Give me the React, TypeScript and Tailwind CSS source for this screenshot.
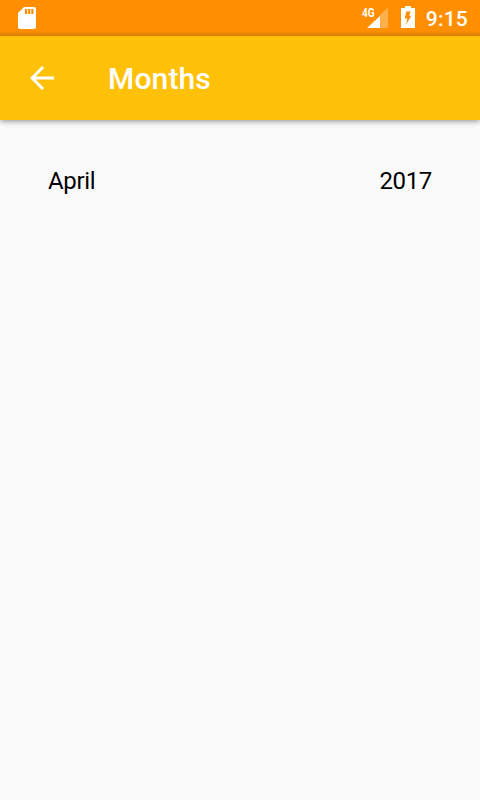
export default function App() {
  return (
    <div className="flex h-[800px] w-[480px] flex-col bg-[#fafafa] font-[Roboto,sans-serif]">
      <header className="z-10 bg-[#ffc107] shadow-[0_1px_6px_rgba(0,0,0,0.45)]">
        <div className="flex h-9 items-center bg-[#ff8f00] bg-[linear-gradient(to_bottom,transparent_31px,rgba(0,0,0,0.14)_36px)] pl-[18px] pr-3 text-white">
          <svg className="h-[22px] w-[18px]" viewBox="0 0 18 22" fill="none">
            <path fill="#fff" fillRule="evenodd" d="M6 0H16Q18 0 18 2V20Q18 22 16 22H2Q0 22 0 20V6ZM7 2V7H9.2V2ZM10.1 2V7H12.3V2ZM13.3 2V7H15.5V2Z" />
          </svg>
          <div className="ml-auto flex h-[22px] items-start">
            <svg className="mr-[13px] h-[22px] w-[26px] overflow-visible" viewBox="0 0 26 22">
              <text x="0" y="9.5" fill="#fff" fontSize="12.5" fontWeight="700" textLength="12.5" lengthAdjust="spacingAndGlyphs">4G</text>
              <path fill="#fff" fillOpacity=".3" d="M18 8L26 .5V21H18Z" />
              <path fill="#fff" d="M5 21L18 9V21Z" />
            </svg>
            <svg className="-mt-px h-[22px] w-[14px]" viewBox="0 0 14 22">
              <path fill="#fff" fillRule="evenodd" d="M4 0H10V2H14V22H0V2H4ZM5.3 5.5H9.7L8.1 9.8H10.3L5 18.7L6.3 12.4H3.7Z" />
            </svg>
            <span className="ml-[11px] text-[21px] font-medium leading-6 tracking-[0.2px]">9:15</span>
          </div>
        </div>
        <div className="flex h-[84px] items-center pl-[30px] text-white">
          <svg className="h-6 w-6" viewBox="0 0 24 24" fill="#fff">
            <path d="M24 10.5H5.7L14.1 2.1 12 0 0 12 12 24 14.1 21.9 5.7 13.5H24Z" />
          </svg>
          <h1 className="ml-[54px] text-[30px] font-medium tracking-[0.15px]">Months</h1>
        </div>
      </header>
      <main className="flex justify-between px-12 pt-[45px] text-2xl tracking-[-0.35px] text-black">
        <span>April</span>
        <span>2017</span>
      </main>
    </div>
  );
}
